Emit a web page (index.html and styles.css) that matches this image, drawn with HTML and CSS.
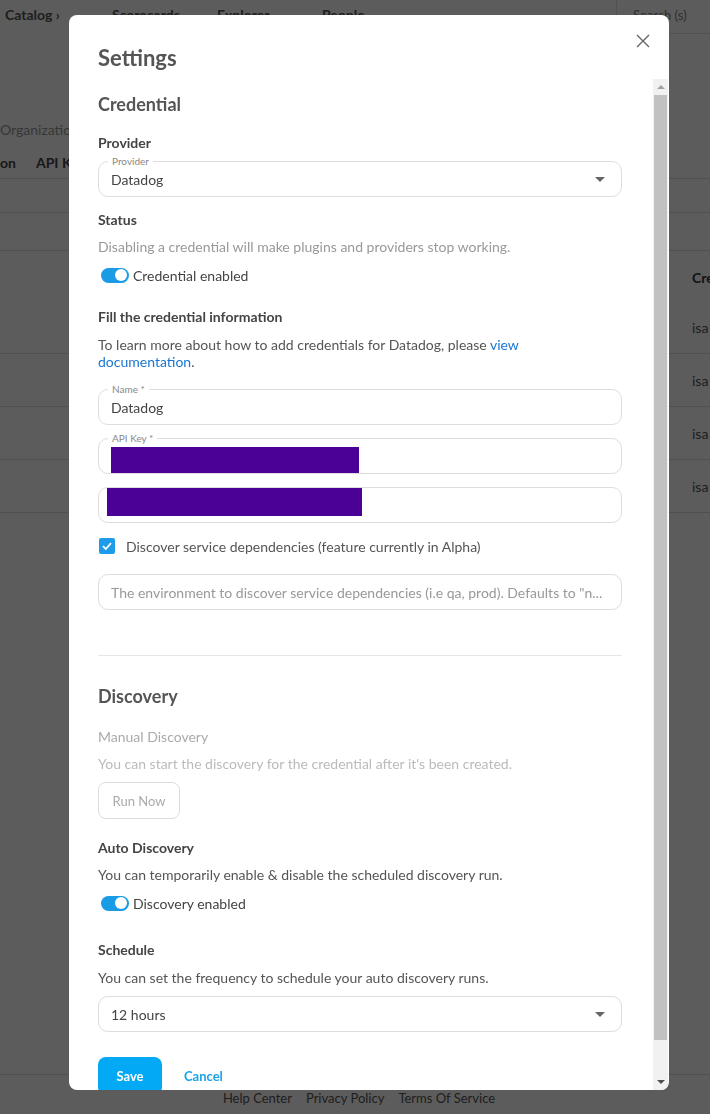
FILE: index.html
```html
<!DOCTYPE html>
<html lang="en">

<head>
  <meta charset="UTF-8" />
  <title>Settings</title>
  <link rel="stylesheet" href="styles.css">
</head>

<body>

  <div class="page">
    <div class="topbar">
      <span class="brand">Catalog &rsaquo;</span>
      <span class="nav-item">Scorecards</span>
      <span class="nav-item">Explorer</span>
      <span class="nav-item">People</span>
      <div class="search">Search (s)</div>
    </div>
    <div class="crumb">Organization</div>
    <div class="tabs">
      <span class="tab">on</span>
      <span class="tab">API Keys</span>
    </div>
    <div class="toolbar"></div>
    <div class="table">
      <div class="row head"><span class="cell">Cre</span></div>
      <div class="row"><span class="cell">isa</span></div>
      <div class="row"><span class="cell">isa</span></div>
      <div class="row"><span class="cell">isa</span></div>
      <div class="row"><span class="cell">isa</span></div>
    </div>
    <div class="footer">
      <span>Help Center</span>
      <span>Privacy Policy</span>
      <span>Terms Of Service</span>
    </div>
  </div>

  <div class="overlay"></div>

  <div class="modal">
    <div class="modal-head">
      <h1>Settings</h1>
      <svg class="close" width="14" height="14" viewBox="0 0 14 14">
        <path d="M1 1L13 13M13 1L1 13" stroke="#666" stroke-width="1.4" fill="none" />
      </svg>
    </div>

    <div class="modal-body">
      <div class="content">
        <h2 class="section-title">Credential</h2>

        <div class="label mt-17">Provider</div>
        <div class="field mt-8">
          <span class="field-label">Provider</span>
          <span class="field-value">Datadog</span>
          <span class="caret"></span>
        </div>

        <div class="label mt-13">Status</div>
        <p class="hint mt-7">Disabling a credential will make plugins and providers stop working.</p>
        <div class="switch-row mt-8">
          <span class="switch"><span class="knob"></span></span>
          <span>Credential enabled</span>
        </div>

        <div class="label mt-22">Fill the credential information</div>
        <p class="info">To learn more about how to add credentials for Datadog, please <a href="#">view<br>documentation</a>.</p>

        <div class="field mt-19">
          <span class="field-label">Name *</span>
          <span class="field-value">Datadog</span>
        </div>
        <div class="field mt-13">
          <span class="field-label">API Key *</span>
          <span class="redact redact-a"></span>
        </div>
        <div class="field mt-13">
          <span class="redact redact-b"></span>
        </div>

        <div class="check-row mt-13">
          <span class="checkbox">
            <svg width="12" height="12" viewBox="0 0 12 12">
              <path d="M2 6.2L4.8 9L10 3.2" stroke="#fff" stroke-width="1.8" fill="none" />
            </svg>
          </span>
          <span>Discover service dependencies (feature currently in Alpha)</span>
        </div>

        <div class="field mt-18">
          <span class="placeholder">The environment to discover service dependencies (i.e qa, prod). Defaults to "n...</span>
        </div>

        <hr class="divider">

        <h2 class="section-title mt-28">Discovery</h2>

        <div class="label disabled mt-19">Manual Discovery</div>
        <p class="hint light mt-7">You can start the discovery for the credential after it's been created.</p>
        <button class="btn-outline mt-8" disabled>Run Now</button>

        <div class="label mt-19">Auto Discovery</div>
        <p class="hint dark mt-7">You can temporarily enable &amp; disable the scheduled discovery run.</p>
        <div class="switch-row mt-8">
          <span class="switch"><span class="knob"></span></span>
          <span>Discovery enabled</span>
        </div>

        <div class="label mt-27">Schedule</div>
        <p class="hint dark mt-8">You can set the frequency to schedule your auto discovery runs.</p>
        <div class="field mt-8">
          <span class="field-value">12 hours</span>
          <span class="caret"></span>
        </div>

        <div class="actions">
          <button class="btn-primary">Save</button>
          <button class="btn-link">Cancel</button>
        </div>
      </div>

      <div class="scrollbar">
        <span class="arrow up"></span>
        <span class="thumb"></span>
        <span class="arrow down"></span>
      </div>
    </div>
  </div>

</body>

</html>
```

FILE: styles.css
```css
* {
  box-sizing: border-box;
}

body {
  margin: 0;
  font-family: Lato, "Liberation Sans", sans-serif;
  background: #fff;
  color: #333;
  overflow: hidden;
}

/* page behind the dialog */
.page {
  height: 1114px;
  display: flex;
  flex-direction: column;
}

.topbar {
  height: 34px;
  display: flex;
  align-items: flex-start;
  padding-left: 5px;
  font-size: 14px;
  line-height: 30px;
  color: #555;
}

.brand {
  font-weight: 700;
  width: 107px;
}

.nav-item {
  font-weight: 700;
  margin-right: 45px;
  width: 60px;
}

.search {
  margin-left: auto;
  width: 94px;
  height: 34px;
  border-left: 1px solid #e0e0e0;
  border-bottom: 1px solid #e0e0e0;
  padding-left: 16px;
  font-size: 13px;
  color: #888;
}

.crumb {
  margin-top: 87px;
  font-size: 14px;
  color: #999;
}

.tabs {
  display: flex;
  gap: 20px;
  height: 33px;
  align-items: center;
  margin-top: 8px;
  border-bottom: 1px solid #ddd;
  font-size: 14px;
  font-weight: 700;
  color: #444;
}

.toolbar {
  height: 34px;
  border-bottom: 1px solid #ddd;
}

.table {
  margin-top: 37px;
  border-top: 1px solid #ddd;
}

.row {
  height: 53px;
  display: flex;
  align-items: center;
  padding-left: 692px;
  border-bottom: 1px solid #ddd;
  font-size: 14px;
  color: #555;
  white-space: nowrap;
}

.row.head {
  height: 50px;
  border-bottom: 0;
  font-weight: 700;
  color: #333;
  align-items: flex-start;
  padding-top: 18px;
}

.footer {
  margin-top: auto;
  height: 40px;
  border-top: 1px solid #ddd;
  display: flex;
  justify-content: center;
  gap: 14px;
  padding-top: 15px;
  padding-left: 8px;
  font-size: 13px;
  color: #555;
}

.overlay {
  position: fixed;
  inset: 0;
  background: rgba(0, 0, 0, 0.64);
}

/* dialog */
.modal {
  position: fixed;
  left: 69px;
  top: 15px;
  width: 600px;
  height: 1075px;
  background: #fff;
  border-radius: 8px;
  overflow: hidden;
  display: flex;
  flex-direction: column;
}

.modal-head {
  height: 64px;
  display: flex;
  align-items: flex-start;
  justify-content: space-between;
  padding: 30px 19px 0 29px;
}

.modal-head h1 {
  margin: 0;
  font-size: 22px;
  line-height: 26px;
  font-weight: 700;
  color: #555;
}

.close {
  margin-top: -11px;
}

.modal-body {
  flex: 1;
  display: flex;
  min-height: 0;
}

.content {
  width: 584px;
  padding: 13px 31px 0 29px;
  overflow: hidden;
  font-size: 14px;
  color: #444;
}

.section-title {
  margin: 0;
  font-size: 18px;
  line-height: 24px;
  font-weight: 700;
  color: #555;
}

.label {
  font-size: 14px;
  line-height: 20px;
  font-weight: 700;
  color: #444;
}

.label.disabled {
  font-weight: 400;
  color: #aaa;
}

.hint {
  margin: 0;
  line-height: 20px;
  color: #999;
}

.hint.light {
  color: #bbb;
}

.hint.dark {
  color: #555;
}

.info {
  margin: 9px 0 0;
  line-height: 17px;
  color: #555;
}

.info a {
  color: #1976d2;
  text-decoration: none;
}

.field {
  position: relative;
  height: 36px;
  border: 1px solid #ddd;
  border-radius: 10px;
  display: flex;
  align-items: center;
  padding: 0 12px;
}

.field-label {
  position: absolute;
  top: -7px;
  left: 9px;
  padding: 0 4px;
  background: #fff;
  font-size: 10px;
  line-height: 12px;
  color: #888;
}

.field-value {
  color: #444;
}

.placeholder {
  color: #999;
  white-space: nowrap;
  overflow: hidden;
}

.caret {
  margin-left: auto;
  margin-right: 4px;
  border-top: 5px solid #666;
  border-left: 5px solid transparent;
  border-right: 5px solid transparent;
}

.redact {
  display: block;
  background: #4b0096;
}

.redact-a {
  width: 248px;
  height: 26px;
  margin: 8px 0 0 0;
}

.redact-b {
  width: 255px;
  height: 28px;
  margin: -6px 0 0 -4px;
}

.switch-row {
  display: flex;
  align-items: center;
  height: 20px;
  gap: 4px;
  padding-left: 3px;
  color: #444;
}

.switch {
  width: 28px;
  height: 15px;
  border-radius: 8px;
  background: #1a9be6;
  position: relative;
}

.knob {
  position: absolute;
  right: 2px;
  top: 1.5px;
  width: 12px;
  height: 12px;
  border-radius: 50%;
  background: #fff;
}

.check-row {
  display: flex;
  align-items: center;
  height: 20px;
  gap: 11px;
  padding-left: 1px;
  color: #555;
}

.checkbox {
  width: 16px;
  height: 16px;
  border-radius: 2px;
  background: #1e9be9;
  display: flex;
  align-items: center;
  justify-content: center;
}

.divider {
  margin: 45px 0 0;
  border: 0;
  border-top: 1px solid #e6e6e6;
}

.btn-outline {
  display: block;
  width: 82px;
  height: 37px;
  border: 1px solid #ddd;
  border-radius: 8px;
  background: #fff;
  font-family: inherit;
  font-size: 13px;
  color: #aaa;
}

.actions {
  margin-top: 25px;
  display: flex;
  align-items: center;
  gap: 10px;
}

.btn-primary {
  width: 64px;
  height: 38px;
  border: 0;
  border-radius: 8px;
  background: #03a9f4;
  color: #fff;
  font-family: inherit;
  font-size: 13px;
  font-weight: 700;
}

.btn-link {
  border: 0;
  background: none;
  font-family: inherit;
  font-size: 13px;
  font-weight: 700;
  color: #1aa3e8;
  padding: 0 12px;
}

.scrollbar {
  width: 15px;
  margin-right: 1px;
  background: #f1f1f1;
  display: flex;
  flex-direction: column;
  align-items: center;
}

.thumb {
  width: 13px;
  flex: 1;
  margin: 0 0 40px;
  background: #c1c1c1;
}

.arrow {
  width: 0;
  height: 0;
  border-left: 4px solid transparent;
  border-right: 4px solid transparent;
}

.arrow.up {
  margin: 6px 0 6px;
  border-bottom: 4px solid #a3a3a3;
}

.arrow.down {
  margin: 0 0 6px;
  border-top: 4px solid #505050;
}

.mt-7 { margin-top: 7px; }
.mt-8 { margin-top: 8px; }
.mt-13 { margin-top: 13px; }
.mt-17 { margin-top: 17px; }
.mt-18 { margin-top: 18px; }
.mt-19 { margin-top: 19px; }
.mt-22 { margin-top: 22px; }
.mt-27 { margin-top: 27px; }
.mt-28 { margin-top: 28px; }
```
